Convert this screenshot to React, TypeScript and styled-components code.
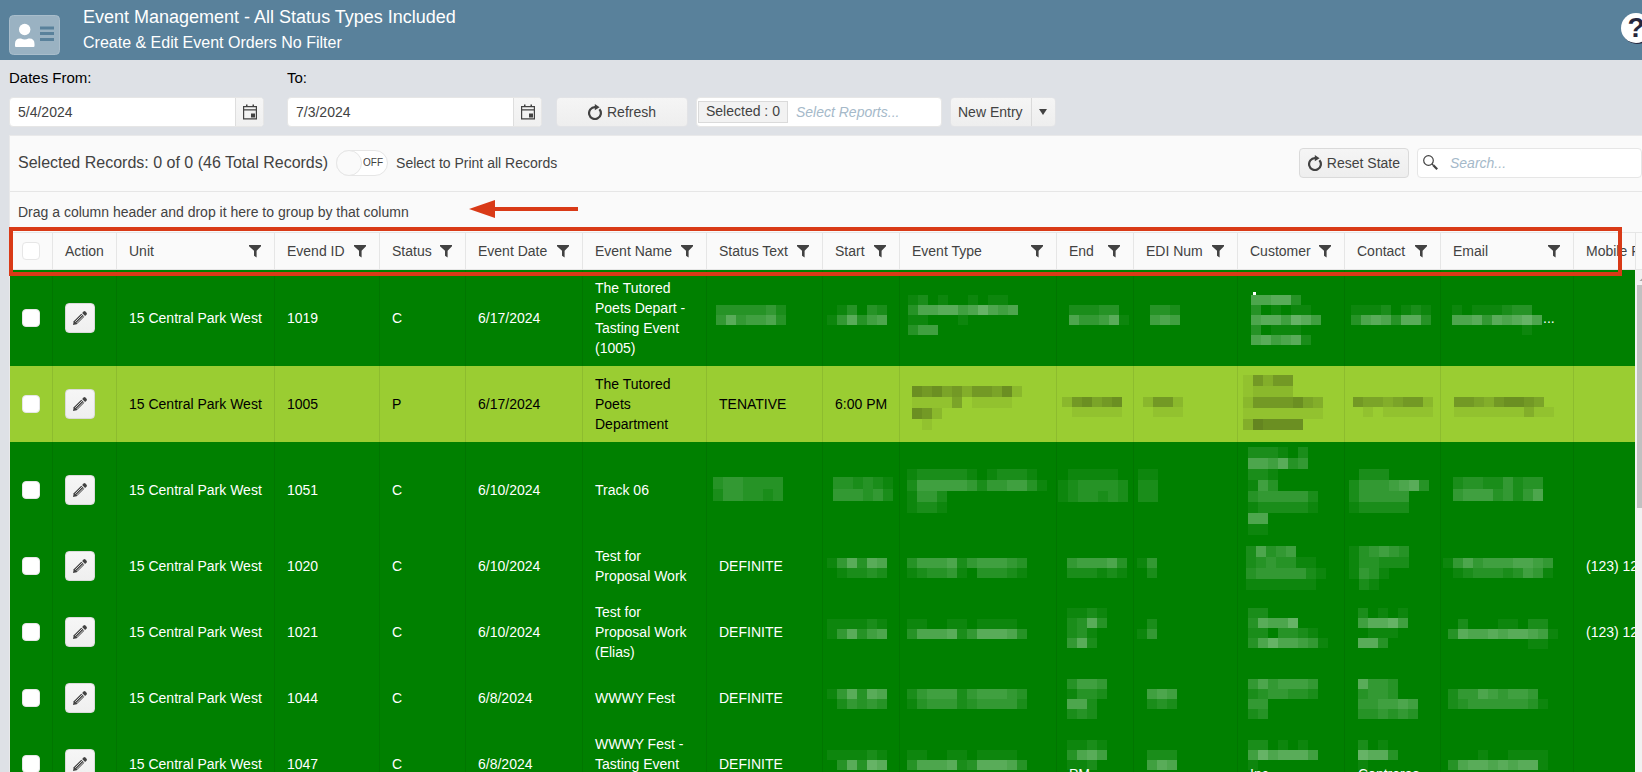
import React from "react";
import styled, { createGlobalStyle, css } from "styled-components";

const font = '"Liberation Sans", Arial, Helvetica, sans-serif';

const GlobalStyle = createGlobalStyle`
  *, *::before, *::after { box-sizing: border-box; }
  body { margin: 0; background: #dee1e6; font-family: ${font}; font-size: 14px; line-height: 20px; color: #424242; }
  button, input { font: inherit; color: inherit; margin: 0; }
`;

const Page = styled.div`
  display: flex;
  flex-direction: column;
  height: 100vh;
  overflow: hidden;
`;

const TopBar = styled.header`
  display: flex;
  flex: none;
  height: 60px;
  padding-left: 9px;
  background: #59819b;
  color: #fff;
`;

const Logo = styled.svg`
  flex: none;
  margin-top: 15px;
`;

const Titles = styled.div`
  flex: 1;
  padding: 4px 0 0 22px;
`;

const Title = styled.h1`
  margin: 0;
  font-size: 18px;
  line-height: 26px;
  font-weight: 400;
`;

const Subtitle = styled.p`
  margin: 0;
  font-size: 16px;
  line-height: 26px;
`;

const Help = styled.button`
  flex: none;
  width: 30px;
  height: 30px;
  margin: 13px -9px 0 0;
  padding: 0;
  border: 0;
  border-radius: 50%;
  background: #fff;
  box-shadow: 1px 1px 0 #26263c;
  color: #26263c;
  font-size: 28px;
  line-height: 30px;
  font-weight: 700;
`;

const Filters = styled.section`
  display: flex;
  flex: none;
  align-items: flex-end;
  gap: 8px;
  padding: 8px 9px 8px;
`;

const Field = styled.div`
  display: flex;
  flex-direction: column;
  gap: 10px;
  margin-right: 15px;
  & + & { margin-right: 6px; }
`;

const FieldLabel = styled.label`
  font-size: 15px;
  line-height: 19px;
  color: #000;
`;

const boxed = css`
  height: 30px;
  border: 1px solid #e6e6e6;
  border-radius: 4px;
`;

const DateBox = styled.div`
  ${boxed}
  display: flex;
  width: 255px;
  background: #fff;
  overflow: hidden;
`;

const TextInput = styled.input`
  flex: 1;
  min-width: 0;
  padding: 0 8px;
  border: 0;
  background: transparent;
  outline: 0;
  &::placeholder { color: #a5b9c9; font-style: italic; opacity: 1; }
`;

const CalendarButton = styled.button`
  display: flex;
  align-items: center;
  justify-content: center;
  width: 28px;
  padding: 0;
  border: 0;
  border-left: 1px solid #dedede;
  background: linear-gradient(#f6f6f6, #f0f0f0);
`;

const Button = styled.button<{ $wide?: boolean }>`
  ${boxed}
  display: flex;
  align-items: center;
  justify-content: center;
  gap: 5px;
  width: ${(p) => (p.$wide ? "132px" : "auto")};
  padding: 0 8px;
  border-color: ${(p) => (p.$wide ? "#e2e3e6" : "#dadada")};
  background: linear-gradient(#f5f5f5, #eeeeee);
`;

const Reports = styled.div`
  ${boxed}
  display: flex;
  align-items: center;
  width: 246px;
  padding-left: 1px;
  background: #fff;
`;

const Chip = styled.span`
  flex: none;
  height: 22px;
  padding: 0 7px;
  border: 1px solid #dadada;
  background: #f2f2f2;
  line-height: 18px;
`;

const SplitButton = styled.div`
  ${boxed}
  display: flex;
  overflow: hidden;
  border-color: #e2e3e6;
  background: linear-gradient(#f5f5f5, #eeeeee);
`;

const SplitPart = styled.button`
  display: flex;
  align-items: center;
  padding: 0 8px 0 7px;
  border: 0;
  background: transparent;
  & + & { border-left: 1px solid #dadada; }
`;

const Grid = styled.main`
  position: relative;
  display: flex;
  flex: 1;
  flex-direction: column;
  min-height: 0;
  margin-left: 9px;
  border: 1px solid #e9e9ea;
  border-width: 1px 0 0 1px;
  background: #fafafa;
`;

const Toolbar = styled.div`
  display: flex;
  flex: none;
  align-items: center;
  height: 56px;
  padding: 0 0 2px 8px;
  border-bottom: 1px solid #e6e6e6;
`;

const RecordCount = styled.span`
  font-size: 16px;
`;

const Switch = styled.label`
  display: flex;
  align-items: center;
  width: 52px;
  height: 26px;
  margin: 0 8px;
  border: 1px solid #e6e6e6;
  border-radius: 13px;
  background: #fff;
  font-size: 10px;
`;

const Knob = styled.input`
  appearance: none;
  flex: none;
  width: 26px;
  height: 26px;
  margin: 0 1px 0 -1px;
  border: 1px solid #e6e6e6;
  border-radius: 50%;
  background: #fafafa;
`;

const Spacer = styled.div`
  flex: 1;
`;

const SearchBox = styled.label`
  ${boxed}
  display: flex;
  align-items: center;
  width: 225px;
  margin-left: 8px;
  padding-left: 5px;
  background: #fff;
  & > input { padding-left: 12px; }
`;

const GroupHint = styled.div`
  flex: none;
  height: 40px;
  padding: 10px 8px;
`;

const Arrow = styled.svg`
  position: absolute;
  left: 459px;
  top: 64px;
`;

const Highlight = styled.div`
  position: absolute;
  left: -1px;
  right: 20px;
  top: 91px;
  height: 49px;
  border: 4px solid #d93a17;
  pointer-events: none;
`;

const GridBody = styled.div`
  display: flex;
  flex: 1;
  min-height: 0;
`;

const TableClip = styled.div`
  flex: 1;
  min-width: 0;
  overflow: hidden;
`;

const Table = styled.table`
  width: 1713px;
  table-layout: fixed;
  border-collapse: separate;
  border-spacing: 0;
`;

const HeadCell = styled.th`
  height: 38px;
  padding: 0 13px 0 12px;
  border: solid #e6e6e6;
  border-width: 1px 0 1px 1px;
  font-weight: 400;
  text-align: left;
  white-space: nowrap;
  &:first-child { border-left: 0; }
`;

const HeadInner = styled.div`
  display: flex;
  align-items: center;
  justify-content: space-between;
`;

const FilterButton = styled.button`
  display: flex;
  padding: 0;
  border: 0;
  background: transparent;
`;

const Row = styled.tr<{ $tentative?: boolean }>`
  background: ${(p) => (p.$tentative ? "#9acd32" : "#008000")};
  color: ${(p) => (p.$tentative ? "#000" : "#fff")};
`;

const Cell = styled.td<{ $flush?: boolean; $nowrap?: boolean }>`
  padding: ${(p) => (p.$flush ? "8px 0" : "8px 12px")};
  border-left: 1px solid rgba(0, 0, 0, 0.08);
  vertical-align: middle;
  white-space: ${(p) => (p.$nowrap ? "nowrap" : "normal")};
  &:first-child { border-left: 0; }
`;

const Check = styled.input`
  appearance: none;
  display: block;
  width: 18px;
  height: 18px;
  margin: 0;
  border: 1px solid #e6e6e6;
  border-radius: 4px;
  background: #fff;
`;

const EditButton = styled.button`
  display: flex;
  align-items: center;
  justify-content: center;
  width: 30px;
  height: 30px;
  padding: 0;
  border: 1px solid #dadada;
  border-radius: 4px;
  background: linear-gradient(#f6f6f6, #efefef);
`;

const MosaicSvg = styled.svg`
  display: block;
  overflow: visible;
  font-size: 14px;
  fill: currentColor;
`;

const ScrollColumn = styled.div`
  display: flex;
  flex: none;
  flex-direction: column;
  width: 17px;
  margin-right: -10px;
`;

const ScrollHead = styled.div`
  flex: none;
  height: 38px;
  border: 1px solid #e6e6e6;
`;

const ScrollTrack = styled.div`
  flex: 1;
  padding: 7px 2px 0;
  background: #f1f1f1;
`;

const ScrollThumb = styled.div`
  height: 223px;
  margin-top: 4px;
  background: #c1c1c1;
`;

const CalendarIcon = () => (
  <svg width="14" height="16" viewBox="0 0 14 16" fill="#424242">
    <path d="M0 2h3V0.500h1.500V2h5V0.500H11V2h3v13.500H0zM1.200 3.200v2h11.600v-2zM1.200 6.400v7.900h11.600V6.400zM8 9.500h4v4H8z" fillRule="evenodd" />
  </svg>
);

const ReloadIcon = () => (
  <svg width="14" height="16" viewBox="0 0 14 16">
    <path d="M11.400 5.200A5.900 5.900 0 1 1 7 3.200" fill="none" stroke="#424242" strokeWidth="2.200" />
    <path d="M6.800 0l4.800 3.200-4.800 3z" fill="#424242" />
  </svg>
);

const FilterIcon = () => (
  <svg width="12" height="13" viewBox="0 0 12 13" fill="#424242">
    <path d="M0 0h12v1.200L7.600 5.800V12.500L5 10.700V5.800L0 1.200z" />
  </svg>
);

const PencilIcon = () => (
  <svg width="16" height="16" viewBox="0 0 16 16">
    <path d="M1 15l.7-3.700L9.300 3.700l3 3L4.700 14.300z" fill="#424242" />
    <path d="M3.200 11.800l7-7M4.600 13l6.800-6.800" stroke="#e4e4e4" strokeWidth="0.900" />
    <path d="M10.100 2.900l1.500-1.500q.9-.6 1.700 0l1.300 1.300q.7.900 0 1.700l-1.500 1.500z" fill="#424242" />
  </svg>
);

const SearchIcon = () => (
  <svg width="15" height="15" viewBox="0 0 15 15" fill="none" stroke="#424242">
    <circle cx="5.500" cy="5.500" r="4.800" strokeWidth="1.200" />
    <path d="M9 9l1.500 1.500" strokeWidth="1.200" />
    <path d="M10.300 10.300l3.900 3.900" strokeWidth="2.200" />
  </svg>
);

/* One pixelated patch: x from the cell's left edge, y from the row's middle,
   the height of its blocks, and one digit of strength for each block. */
type Patch = { x: number; y: number; h?: number; rows: string[]; text?: [number, number, string]; dot?: [number, number] };

const Mosaic = ({ patch, lines }: { patch: Patch; lines: number }) => {
  const h = patch.h ?? 10;
  return (
    <MosaicSvg width="60" height={lines * 20} viewBox={`1 ${-lines * 10} 60 ${lines * 20}`} aria-hidden="true" shapeRendering="crispEdges">
      {patch.rows.map((row, r) =>
        [...row].map((v, c) =>
          v === "0" ? null : (
            <rect key={`${r}-${c}`} x={patch.x + c * 10} y={patch.y + r * h} width="10" height={h} opacity={Number(v) * 0.05} />
          )
        )
      )}
      {patch.dot && <rect x={patch.dot[0]} y={patch.dot[1]} width="3" height="3" />}
      {patch.text && <text x={patch.text[0]} y={patch.text[1]}>{patch.text[2]}</text>}
    </MosaicSvg>
  );
};

const columns: { name: string; width: number }[] = [
  { name: "Unit", width: 158 },
  { name: "Evend ID", width: 105 },
  { name: "Status", width: 86 },
  { name: "Event Date", width: 117 },
  { name: "Event Name", width: 124 },
  { name: "Status Text", width: 116 },
  { name: "Start", width: 77 },
  { name: "Event Type", width: 157 },
  { name: "End", width: 77 },
  { name: "EDI Num", width: 104 },
  { name: "Customer", width: 107 },
  { name: "Contact", width: 96 },
  { name: "Email", width: 133 },
  { name: "Mobile Phone", width: 150 },
];

type EventRow = {
  id: string;
  status: string;
  date: string;
  name: string;
  lines: number;
  rest: (string | Patch)[];
};

const p = (x: number, y: number, rows: string, h?: number, extra?: Partial<Patch>): Patch => ({ x, y, h, rows: rows.split(" "), ...extra });

const events: EventRow[] = [
  {
    id: "1019", status: "C", date: "6/17/2024", name: "The Tutored Poets Depart - Tasting Event (1005)", lines: 4,
    rest: [
      p(10, -13, "3333342 4745563"),
      p(5, -13, "013032 147356"),
      p(9, -23, "12010010110 36677568656 11000100000 355"),
      p(13, -13, "222330 644571"),
      p(7, -13, "0332 0565"),
      p(14, -23, "66773 3010110 6775875 301110 675672", 10, { dot: [16, -26] }),
      p(7, -13, "11120121 36763773"),
      p(12, -13, "101112330 667476786 00000001", 10, { text: [103, 5, "..."] }),
      "",
    ],
  },
  {
    id: "1005", status: "P", date: "6/17/2024", name: "The Tutored Poets Department", lines: 3,
    rest: [
      "TENATIVE",
      "6:00 PM",
      p(13, -18, "65645355462 11114011110 652 010", 11),
      p(6, -7, "256456 011111"),
      p(10, -7, "2552 0111"),
      p(6, -29, "153550 122220 25555643 11111111 376666", 11),
      p(9, -7, "54434552 01011111"),
      p(14, -7, "554356654 1111111311"),
      "",
    ],
  },
  {
    id: "1051", status: "C", date: "6/10/2024", name: "Track 06", lines: 4,
    rest: [
      p(7, -13, "3443333 2443323", 12),
      p(11, -13, "332321 444342", 12),
      p(8, -21, "12222210122210 25555542445531 1442 1221", 11),
      p(2, -21, "0111110 1233332 1233232", 11),
      p(5, -21, "11 22 22", 11),
      p(11, -43, "222102 665734 221 153 3444442 1222221 66 11", 11),
      p(5, -21, "0222 24445673 244444 122222", 11),
      p(13, -13, "233224233 455534246", 12),
      "",
    ],
  },
  {
    id: "1020", status: "C", date: "6/10/2024", name: "Test for Proposal Work", lines: 2,
    rest: [
      "DEFINITE",
      p(5, -8, "147376 012232"),
      p(8, -8, "355562455543 123341033321"),
      p(11, -8, "455563 222121"),
      p(4, -8, "14 02"),
      p(9, -20, "26345 2343311 34444421 11111110", 11),
      p(5, -20, "134543 133222 1431 021", 11),
      p(3, -8, "14645556654 01233323541"),
      "(123) 123-1234",
    ],
  },
  {
    id: "1021", status: "C", date: "6/10/2024", name: "Test for Proposal Work (Elias)", lines: 3,
    rest: [
      "DEFINITE",
      p(5, -13, "111121 147356"),
      p(8, -13, "110011011110 366672477763"),
      p(11, -24, "1121 2373 2310 4720"),
      p(4, -13, "02 14"),
      p(11, -24, "22 37668 2203321 368665410"),
      p(14, -24, "20101 57785 0111 773"),
      p(8, -13, "0200011022 37667677651 0000000011"),
      "(123) 123-1234",
    ],
  },
  {
    id: "1044", status: "C", date: "6/8/2024", name: "WWWY Fest", lines: 2,
    rest: [
      "DEFINITE",
      p(5, -9, "147376 024343"),
      p(8, -9, "245552455543 134442344442"),
      p(11, -19, "3554 1332 6620 2320"),
      p(14, -9, "565 232"),
      p(11, -19, "4645554 2344332 44 23"),
      p(14, -19, "7443 3443 445565 334343"),
      p(8, -9, "244654554 2344444431"),
      "",
    ],
  },
  {
    id: "1047", status: "C", date: "6/8/2024", name: "WWWY Fest - Tasting Event (1044)", lines: 3,
    rest: [
      "DEFINITE",
      p(5, -14, "111121 037387"),
      p(8, -14, "110011011110 366672377763"),
      p(11, -24, "1121 3675 1120", 10, { text: [13, 15, "PM"] }),
      p(14, -14, "222 576"),
      p(11, -24, "220101 5867775 1", 10, { text: [13, 15, "Inc"] }),
      p(14, -24, "2010 8773 1", 10, { text: [14, 15, "Contreras"] }),
      p(8, -14, "0001001111 3677676771"),
      "",
    ],
  },
];

const DateField = ({ id, label, value }: { id: string; label: string; value: string }) => (
  <Field>
    <FieldLabel htmlFor={id}>{label}</FieldLabel>
    <DateBox>
      <TextInput id={id} defaultValue={value} />
      <CalendarButton aria-label={`Open calendar, ${label}`}><CalendarIcon /></CalendarButton>
    </DateBox>
  </Field>
);

export default function App() {
  return (
    <Page>
      <GlobalStyle />
      <TopBar>
        <Logo width="52" height="40" viewBox="0 0 52 40">
          <rect x="0.500" y="0.500" width="50" height="39" rx="4" fill="#9ab2c2" stroke="#a9bdcb" />
          <circle cx="15.700" cy="14.500" r="5.700" fill="#fff" />
          <path d="M6 31v-2q0-5.500 5-5.500h1q3.700 2 7.500 0h1q5 0 5 5.500v2q0 1-1 1H7q-1 0-1-1z" fill="#fff" />
          <path d="M31 13h14M31 18.500h14M31 24.500h14" stroke="#59819b" strokeWidth="2.800" />
        </Logo>
        <Titles>
          <Title>Event Management - All Status Types Included</Title>
          <Subtitle>Create &amp; Edit Event Orders No Filter</Subtitle>
        </Titles>
        <Help aria-label="Help">?</Help>
      </TopBar>

      <Filters>
        <DateField id="from" label="Dates From:" value="5/4/2024" />
        <DateField id="to" label="To:" value="7/3/2024" />
        <Button $wide><ReloadIcon />Refresh</Button>
        <Reports>
          <Chip>Selected : 0</Chip>
          <TextInput aria-label="Select Reports" placeholder="Select Reports..." />
        </Reports>
        <SplitButton>
          <SplitPart>New Entry</SplitPart>
          <SplitPart aria-label="More entry types">
            <svg width="8" height="6" viewBox="0 0 8 6" fill="#424242"><path d="M0 0h8L4 6z" /></svg>
          </SplitPart>
        </SplitButton>
      </Filters>

      <Grid>
        <Toolbar>
          <RecordCount>Selected Records: 0 of 0 (46 Total Records)</RecordCount>
          <Switch>
            <Knob type="checkbox" role="switch" aria-label="Select to Print all Records" />
            OFF
          </Switch>
          <span>Select to Print all Records</span>
          <Spacer />
          <Button><ReloadIcon />Reset State</Button>
          <SearchBox>
            <SearchIcon />
            <TextInput aria-label="Search" placeholder="Search..." />
          </SearchBox>
        </Toolbar>
        <GroupHint>Drag a column header and drop it here to group by that column</GroupHint>
        <GridBody>
          <TableClip>
            <Table>
              <colgroup>
                <col width="42" />
                <col width="64" />
                {columns.map((c) => <col key={c.name} width={c.width} />)}
              </colgroup>
              <thead>
                <tr>
                  <HeadCell><Check type="checkbox" aria-label="Select all" /></HeadCell>
                  <HeadCell>Action</HeadCell>
                  {columns.map((c) => (
                    <HeadCell key={c.name}>
                      <HeadInner>
                        {c.name}
                        <FilterButton aria-label={`Filter ${c.name}`}><FilterIcon /></FilterButton>
                      </HeadInner>
                    </HeadCell>
                  ))}
                </tr>
              </thead>
              <tbody>
                {events.map((e) => (
                  <Row key={e.id} $tentative={e.status === "P"}>
                    <Cell><Check type="checkbox" aria-label={`Select ${e.id}`} /></Cell>
                    <Cell><EditButton aria-label={`Edit ${e.id}`}><PencilIcon /></EditButton></Cell>
                    <Cell $nowrap>15 Central Park West</Cell>
                    <Cell>{e.id}</Cell>
                    <Cell>{e.status}</Cell>
                    <Cell>{e.date}</Cell>
                    <Cell>{e.name}</Cell>
                    {e.rest.map((v, i) =>
                      typeof v === "string" ? (
                        <Cell key={i} $nowrap>{v}</Cell>
                      ) : (
                        <Cell key={i} $flush><Mosaic patch={v} lines={e.lines} /></Cell>
                      )
                    )}
                  </Row>
                ))}
              </tbody>
            </Table>
          </TableClip>
          <ScrollColumn>
            <ScrollHead />
            <ScrollTrack>
              <svg width="13" height="4" viewBox="0 0 13 4" display="block" fill="#a3a3a3"><path d="M2.500 4h8l-4-4z" /></svg>
              <ScrollThumb />
            </ScrollTrack>
          </ScrollColumn>
        </GridBody>
        <Arrow width="110" height="18" viewBox="0 0 110 18" fill="#d93a17" aria-hidden="true">
          <path d="M0 9l26-9v7h83v4H26v7z" />
        </Arrow>
        <Highlight />
      </Grid>
    </Page>
  );
}
